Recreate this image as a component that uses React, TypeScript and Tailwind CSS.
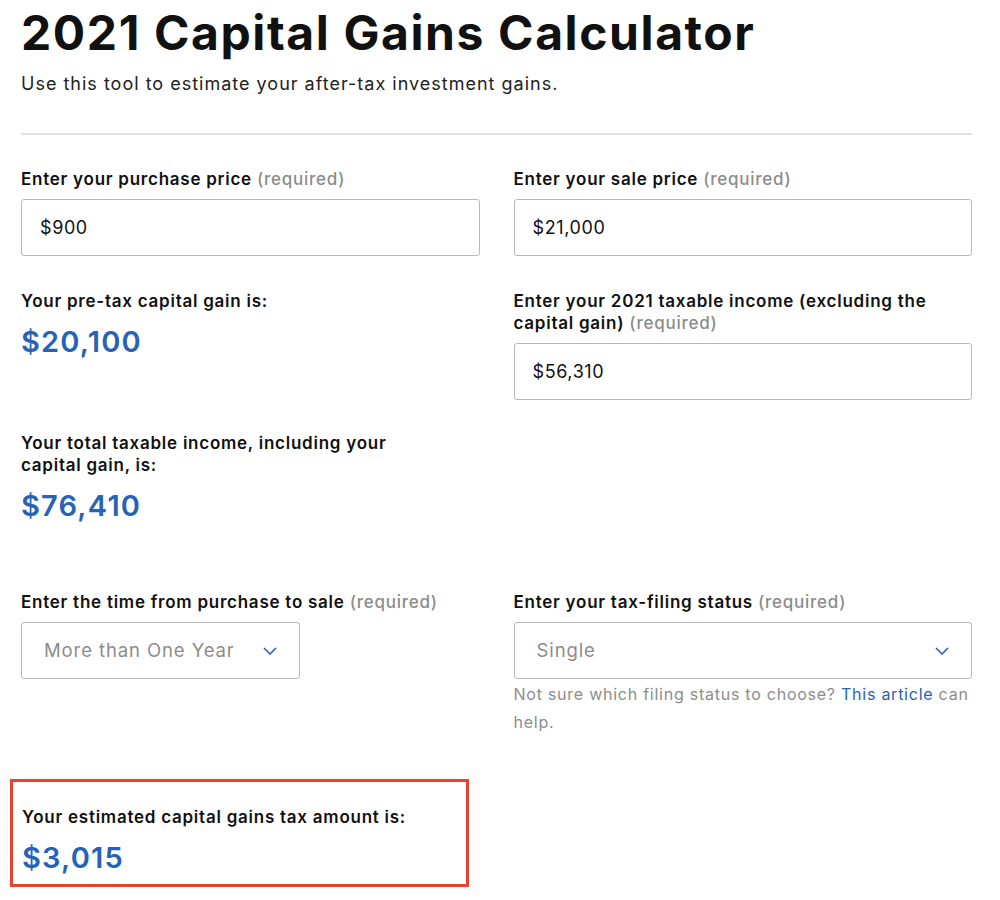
import React from 'react';

const BLUE = 'text-[#2662b6]';

const Req = () => <span className="text-[#8c8c8c] font-medium">(required)</span>;

const Chevron = () => (
    <svg width="14" height="8" viewBox="0 0 14 8" fill="none">
        <path d="M1 1l6 6 6-6" stroke="#2662b6" strokeWidth="1.6" />
    </svg>
);

const TextField: React.FC<{ value: string }> = ({ value }) => (
    <div className="h-[57px] border border-[#b8b8b8] rounded-[3px] flex items-center px-[18px] text-[18px] tracking-[0.6px] text-[#111]">
        {value}
    </div>
);

const SelectField: React.FC<{ value: string; className?: string }> = ({ value, className }) => (
    <div className={`h-[57px] border border-[#b8b8b8] rounded-[3px] flex items-center justify-between pl-[22px] pr-[22px] text-[18.5px] tracking-[0.9px] text-[#8c8c8c] ${className ?? ''}`}>
        <span>{value}</span>
        <Chevron />
    </div>
);

const Label: React.FC<{ children: React.ReactNode }> = ({ children }) => (
    <div className="text-[17px] leading-[22px] font-semibold tracking-[0.75px] text-[#111]">{children}</div>
);

const Result: React.FC<{ label: React.ReactNode; value: string }> = ({ label, value }) => (
    <div className="flex flex-col">
        <Label>{label}</Label>
        <div className={`mt-[14px] text-[29px] leading-[32px] font-semibold tracking-[1.2px] ${BLUE}`}>{value}</div>
    </div>
);

export default function App() {
    return (
        <div className="bg-white min-h-[900px] px-[21px] pt-[5px] font-['Inter',sans-serif] text-[#111]">
            <h1 className="text-[48px] leading-[56px] font-bold tracking-[1.6px]">2021 Capital Gains Calculator</h1>
            <p className="mt-[11px] text-[18px] leading-[24px] tracking-[1px] text-[#222]">Use this tool to estimate your after-tax investment gains.</p>
            <div className="mt-[37px] h-[2px] bg-[#e0e0e0] w-[951px]" />

            <div className="w-[951px] grid grid-cols-2 gap-x-[34px] mt-[33px]">
                <div className="flex flex-col gap-[9px]">
                    <Label>Enter your purchase price <Req /></Label>
                    <TextField value="$900" />
                </div>
                <div className="flex flex-col gap-[9px]">
                    <Label>Enter your sale price <Req /></Label>
                    <TextField value="$21,000" />
                </div>

                <div className="flex flex-col mt-[34px]">
                    <Result label="Your pre-tax capital gain is:" value="$20,100" />
                    <div className="mt-[74px] pr-[30px]">
                        <Result label="Your total taxable income, including your capital gain, is:" value="$76,410" />
                    </div>
                </div>
                <div className="flex flex-col gap-[9px] mt-[34px]">
                    <div className="pr-[30px]">
                        <Label>Enter your 2021 taxable income (excluding the capital gain) <Req /></Label>
                    </div>
                    <TextField value="$56,310" />
                </div>

                <div className="flex flex-col gap-[9px] mt-[69px]">
                    <Label>Enter the time from purchase to sale <Req /></Label>
                    <SelectField value="More than One Year" className="w-[279px]" />
                </div>
                <div className="flex flex-col gap-[9px] mt-[69px]">
                    <Label>Enter your tax-filing status <Req /></Label>
                    <SelectField value="Single" />
                    <p className="-mt-[8px] text-[16px] leading-[28px] tracking-[0.75px] text-[#8c8c8c]">
                        Not sure which filing status to choose? <a className={BLUE}>This article</a> can help.
                    </p>
                </div>
            </div>

            <div className="mt-[43px] -ml-[11px] w-[459px] border-[3px] border-[#e8432d] px-[9px] pt-[24px] pb-[10px]">
                <Result label="Your estimated capital gains tax amount is:" value="$3,015" />
            </div>
        </div>
    );
}
